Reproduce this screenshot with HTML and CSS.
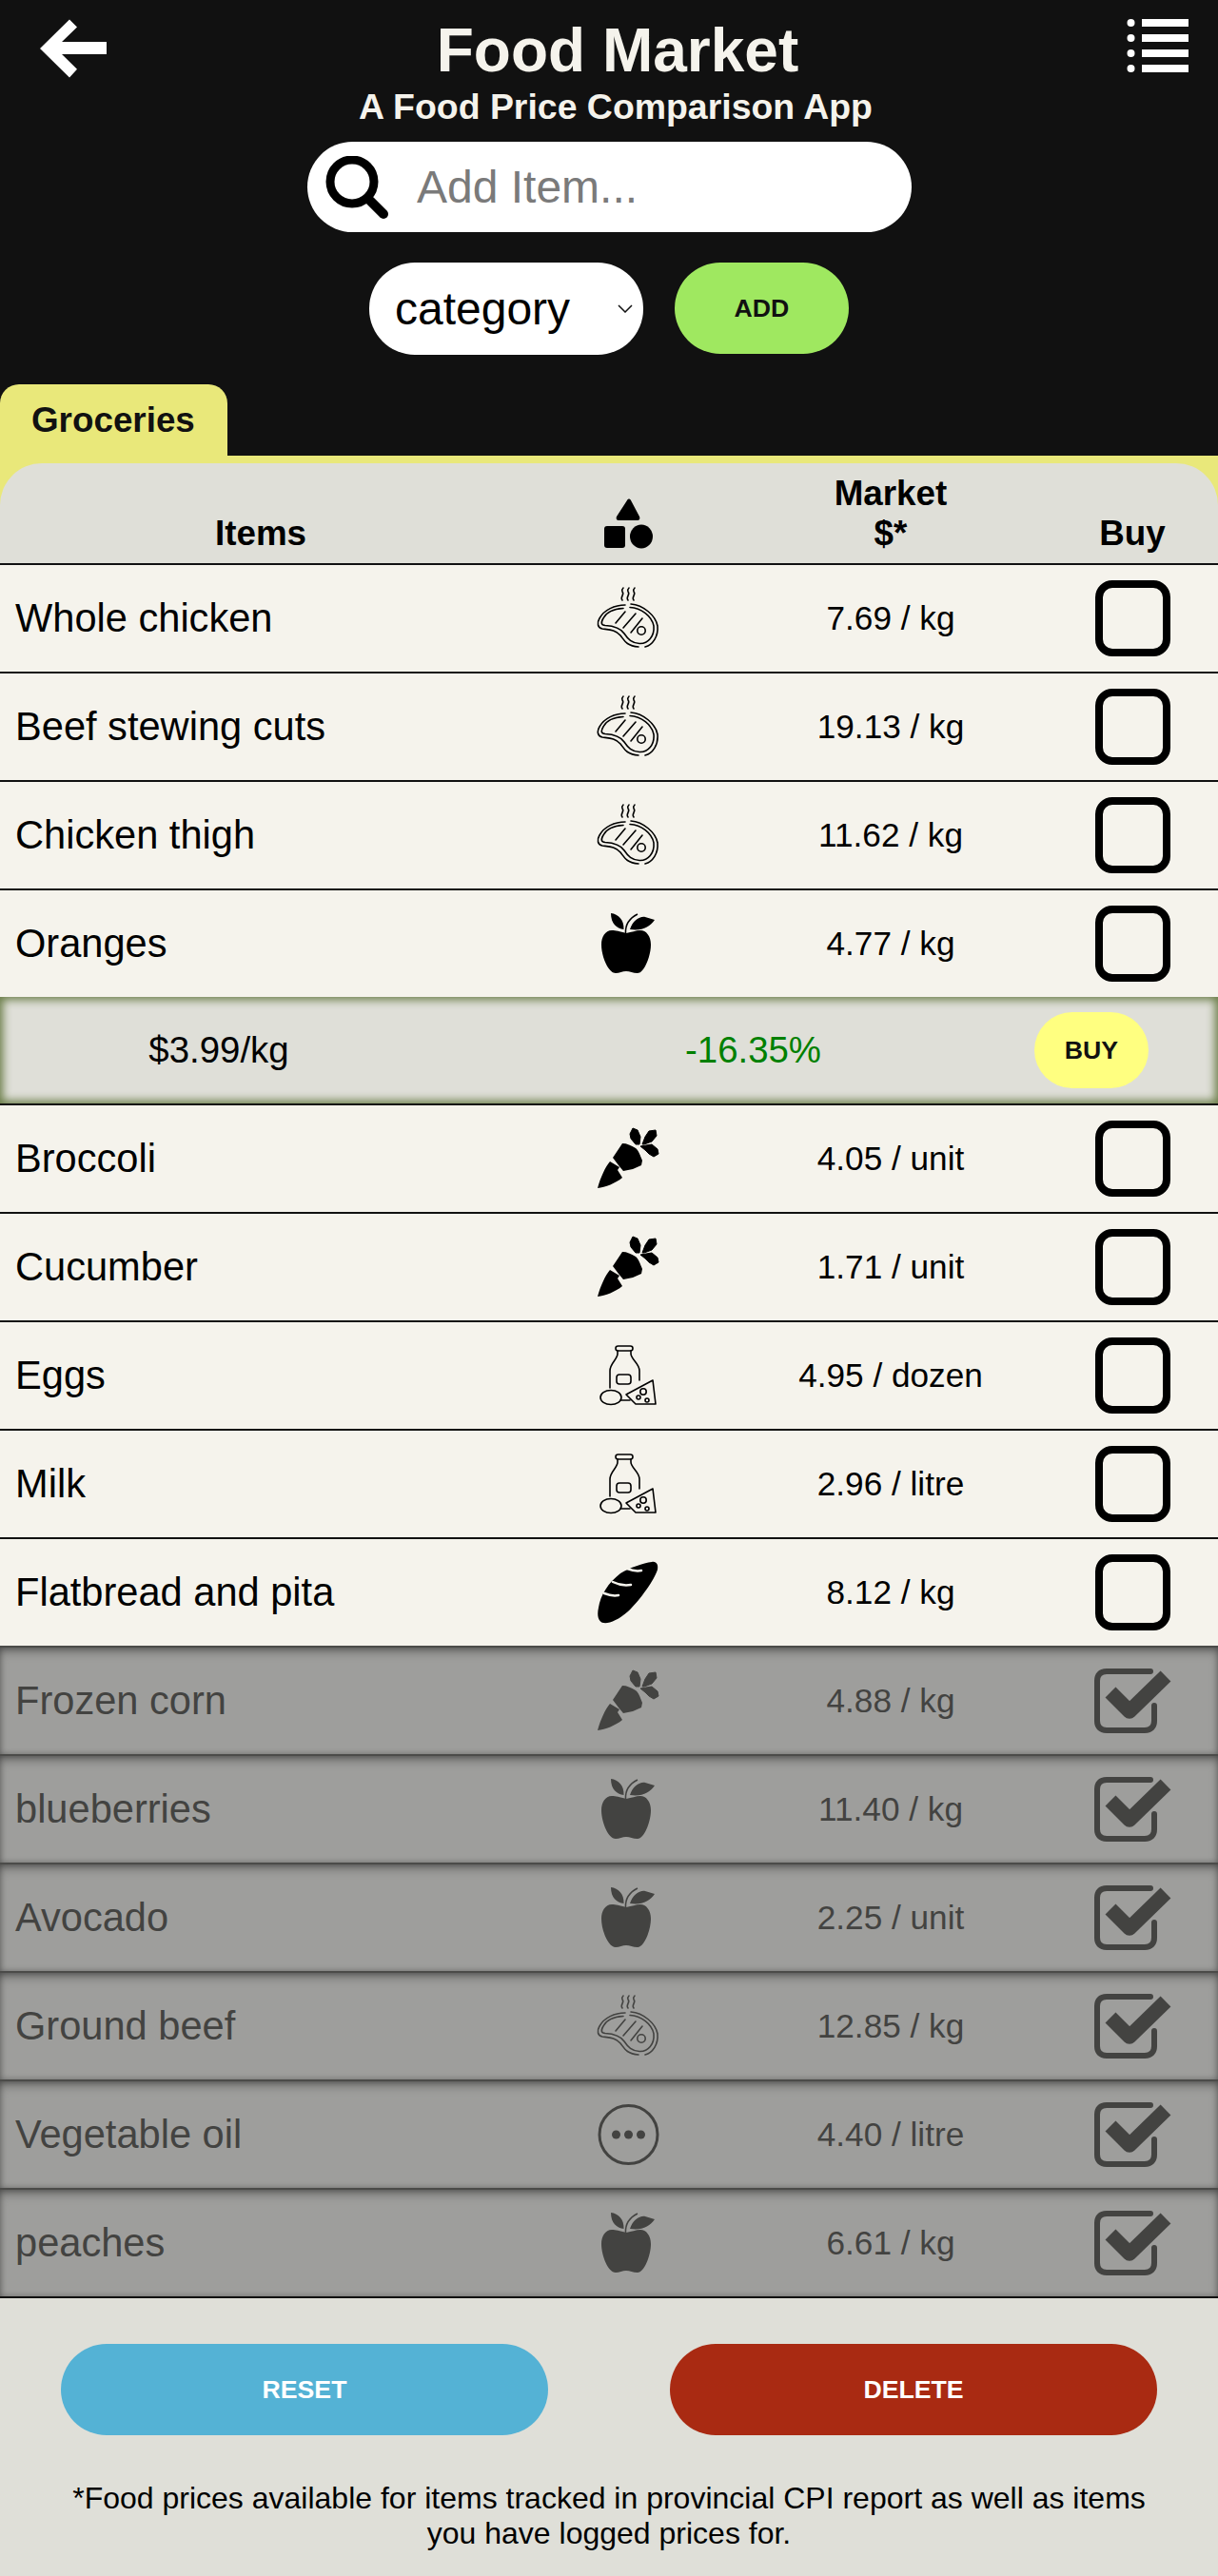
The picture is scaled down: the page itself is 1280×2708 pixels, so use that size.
FILE: index.html
```html
<!DOCTYPE html>
<html lang="en">
<head>
  <meta charset="UTF-8" />
  <meta name="viewport" content="width=device-width, initial-scale=1.0" />
  <title>Food Market</title>
  <link rel="stylesheet" href="styles.css">
</head>
<body>
  <svg class="defs" width="0" height="0">
    <symbol id="i-meat" viewBox="0 0 120 100">
      <g fill="none" stroke="currentColor" stroke-width="1.6" stroke-linecap="round">
        <path d="M54 31c-3-4 3-6 0-9-1-2 0-3 1-4M60 31c-3-4 3-6 0-9-1-2 0-3 1-4M66 31c-3-4 3-6 0-9-1-2 0-3 1-4"/>
        <path d="M57 36C46 36 35 41 30 50 27 55 28 60 33 61 40 62 47 62 52 68 56 73 58 79 71 80M78 80C86 78 92 69 91 58 89 47 76 36 63 35"/>
        <path d="M55 39.5C45 40 37 44 34 50 31 55 32 57 36 57.5 45 58 52 60 56 66 60 72 64 76 72 76.5 81 77 88 69 87 58 85 48 74 39 62 38.5"/>
        <path d="M47 55l10-12M55 60l13-15M63 65l12-15"/>
        <circle cx="74" cy="63" r="4.2"/>
      </g>
    </symbol>
    <symbol id="i-fruit" viewBox="-10 -8 120 100">
      <path fill="currentColor" d="M48 31C41 29 37 28 33 28 26 28 22 35 22 43c0 12 7 30 15 30 4 0 7-2 11-2s7 2 12 2c7 0 14-18 14-30 0-9-5-15-11-15-5 0-9 2-15 3z"/>
      <path fill="currentColor" d="M32 10c8 1 14 7 13.5 17C38 26 32 21 32 10zM52 27c3-9 10-14 16-13l10 3c-5 7-13 12-26 10z"/>
      <path fill="none" stroke="currentColor" stroke-width="1.5" d="M47.5 31C47 22 52 15 60 11"/>
    </symbol>
    <symbol id="i-veg" viewBox="-10 -2 120 100">
      <path fill="currentColor" d="M18 79c3-11 8-22 13-28l10 6-2 3 5 8c-7 6-18 10-26 11z"/>
      <path fill="currentColor" d="M44 32l-10 15 6 8 5 6 5-1 5-1 9-4 1-5c-2-5-4-11-7-13-5-3-9-5-14-5z"/>
      <path fill="currentColor" stroke="currentColor" stroke-linejoin="round" d="M58 33l-5-6-1-5 3-6 5 2 3 7-1 8zM65 33l3-8 4-6 7-1 1 6-5 6-8 3zM63 35l12-2 6 5 1 5-5 3-5-3-4-4z"/>
    </symbol>
    <symbol id="i-dairy" viewBox="0 0 120 100">
      <g fill="none" stroke="currentColor" stroke-width="1.6" stroke-linecap="round" stroke-linejoin="round">
        <rect x="47" y="19" width="18" height="5" rx="2.5"/>
        <path d="M49 24v3c0 6-8 10-8 18v18M63 24v3c0 6 9 10 9 18v10M52 76h10"/>
        <rect x="48" y="49" width="15" height="10" rx="3"/>
        <ellipse cx="42" cy="73" rx="11" ry="7.5"/>
        <path d="M58 70l28-15 3 25H68z"/>
        <circle cx="76" cy="67" r="3.2"/>
        <circle cx="71" cy="73" r="2"/>
        <circle cx="80" cy="76" r="2"/>
      </g>
    </symbol>
    <symbol id="i-bread" viewBox="0 0 120 100">
      <path fill="currentColor" d="M85 18c5-1 7 3 6 8-3 10-18 32-31 44-10 9-20 13-26 12-5-1-7-7-5-16 2-13 10-26 23-36 10-6 24-11 33-12z"/>
      <path fill="none" stroke="#f5f3ec" stroke-width="2.5" stroke-linecap="round" d="M59 25c5 2 10 3 15 2M44 39c6 3 13 4 19 3M35 51c5 2 10 3 15 2"/>
    </symbol>
    <symbol id="i-other" viewBox="0 0 120 100">
      <circle cx="60.5" cy="50" r="30.5" fill="none" stroke="currentColor" stroke-width="3"/>
      <circle cx="47.5" cy="50" r="4.5" fill="currentColor"/>
      <circle cx="60.5" cy="50" r="4.5" fill="currentColor"/>
      <circle cx="73.5" cy="50" r="4.5" fill="currentColor"/>
    </symbol>
    <symbol id="i-check" viewBox="0 -2 120 100">
      <path fill="none" stroke="currentColor" stroke-width="6" stroke-linecap="round" d="M79 17H33c-7 0-10 4-10 10v42c0 6 3 10 10 10h40c7 0 10-4 10-10V53"/>
      <path fill="none" stroke="currentColor" stroke-width="15.5" stroke-linejoin="round" d="M37 39l20 20 38-37"/>
    </symbol>
  </svg>

  <header class="top">
    <a class="back" href="#" aria-label="Back">
      <svg width="72" height="64" viewBox="0 0 72 64"><path fill="#fff" d="M0 31 31 .5l8 8L23 24h47v13H23l16 15.7-8 8.800z"/></svg>
    </a>
    <a class="menu" href="#" aria-label="Menu">
      <svg width="65" height="56" viewBox="0 0 65 56" fill="#fff">
        <circle cx="4.5" cy="4" r="4"/><rect x="16" width="49" height="8"/>
        <circle cx="4.5" cy="20" r="4"/><rect x="16" y="16" width="49" height="8"/>
        <circle cx="4.5" cy="36" r="4"/><rect x="16" y="32" width="49" height="8"/>
        <circle cx="4.5" cy="52" r="4"/><rect x="16" y="48" width="49" height="8"/>
      </svg>
    </a>
    <h1>Food Market</h1>
    <h3>A Food Price Comparison App</h3>
    <div class="search">
      <svg width="66" height="66" viewBox="0 0 66 66">
        <circle cx="28" cy="27" r="23" fill="none" stroke="#000" stroke-width="9"/>
        <path d="M47 47l14 14" stroke="#000" stroke-width="10" stroke-linecap="round"/>
      </svg>
      <input type="text" placeholder="Add Item..." />
    </div>
    <div class="add-row">
      <div class="select-wrap">
        <select>
          <option>category</option>
        </select>
        <svg class="chevron" width="16" height="9" viewBox="0 0 16 9"><path d="M1 1l7 7 7-7" fill="none" stroke="#111" stroke-width="1.5"/></svg>
      </div>
      <button class="btn btn-add">ADD</button>
    </div>
    <div class="tab">Groceries</div>
  </header>

  <main class="panel">
    <div class="row head">
      <div class="cell">Items</div>
      <div class="cell">
        <svg width="52" height="54" viewBox="0 0 52 54">
          <path d="M24 2c1-2 3-2 4 0l9 17c1 2 0 4-2 4H15c-2 0-3-2-2-4z"/>
          <rect x="0" y="29" width="22" height="23" rx="3"/>
          <ellipse cx="39" cy="40" rx="12" ry="12.5"/>
        </svg>
      </div>
      <div class="cell">Market<br>$*</div>
      <div class="cell">Buy</div>
    </div>

    <div class="row">
      <div class="name">Whole chicken</div>
      <svg class="ico"><use href="#i-meat"/></svg>
      <div class="price">7.69 / kg</div>
      <div class="box"></div>
    </div>
    <div class="row">
      <div class="name">Beef stewing cuts</div>
      <svg class="ico"><use href="#i-meat"/></svg>
      <div class="price">19.13 / kg</div>
      <div class="box"></div>
    </div>
    <div class="row">
      <div class="name">Chicken thigh</div>
      <svg class="ico"><use href="#i-meat"/></svg>
      <div class="price">11.62 / kg</div>
      <div class="box"></div>
    </div>
    <div class="row open">
      <div class="name">Oranges</div>
      <svg class="ico"><use href="#i-fruit"/></svg>
      <div class="price">4.77 / kg</div>
      <div class="box"></div>
    </div>
    <div class="deal">
      <div class="deal-price">$3.99/kg</div>
      <div class="deal-pct">-16.35%</div>
      <button class="btn btn-buy">BUY</button>
    </div>
    <div class="row">
      <div class="name">Broccoli</div>
      <svg class="ico"><use href="#i-veg"/></svg>
      <div class="price">4.05 / unit</div>
      <div class="box"></div>
    </div>
    <div class="row">
      <div class="name">Cucumber</div>
      <svg class="ico"><use href="#i-veg"/></svg>
      <div class="price">1.71 / unit</div>
      <div class="box"></div>
    </div>
    <div class="row">
      <div class="name">Eggs</div>
      <svg class="ico"><use href="#i-dairy"/></svg>
      <div class="price">4.95 / dozen</div>
      <div class="box"></div>
    </div>
    <div class="row">
      <div class="name">Milk</div>
      <svg class="ico"><use href="#i-dairy"/></svg>
      <div class="price">2.96 / litre</div>
      <div class="box"></div>
    </div>
    <div class="row">
      <div class="name">Flatbread and pita</div>
      <svg class="ico"><use href="#i-bread"/></svg>
      <div class="price">8.12 / kg</div>
      <div class="box"></div>
    </div>

    <div class="row done">
      <div class="name">Frozen corn</div>
      <svg class="ico"><use href="#i-veg"/></svg>
      <div class="price">4.88 / kg</div>
      <svg class="ico"><use href="#i-check"/></svg>
    </div>
    <div class="row done">
      <div class="name">blueberries</div>
      <svg class="ico"><use href="#i-fruit"/></svg>
      <div class="price">11.40 / kg</div>
      <svg class="ico"><use href="#i-check"/></svg>
    </div>
    <div class="row done">
      <div class="name">Avocado</div>
      <svg class="ico"><use href="#i-fruit"/></svg>
      <div class="price">2.25 / unit</div>
      <svg class="ico"><use href="#i-check"/></svg>
    </div>
    <div class="row done">
      <div class="name">Ground beef</div>
      <svg class="ico"><use href="#i-meat"/></svg>
      <div class="price">12.85 / kg</div>
      <svg class="ico"><use href="#i-check"/></svg>
    </div>
    <div class="row done">
      <div class="name">Vegetable oil</div>
      <svg class="ico"><use href="#i-other"/></svg>
      <div class="price">4.40 / litre</div>
      <svg class="ico"><use href="#i-check"/></svg>
    </div>
    <div class="row done">
      <div class="name">peaches</div>
      <svg class="ico"><use href="#i-fruit"/></svg>
      <div class="price">6.61 / kg</div>
      <svg class="ico"><use href="#i-check"/></svg>
    </div>
  </main>

  <footer class="foot">
    <div class="foot-btns">
      <button class="btn btn-reset">RESET</button>
      <button class="btn btn-delete">DELETE</button>
    </div>
    <p>*Food prices available for items tracked in provincial CPI report as well as items you have logged prices for.</p>
  </footer>
</body>
</html>
```

FILE: styles.css
```css
body {
  margin: 0;
  font-family: "Liberation Sans", Arial, sans-serif;
  background: #111;
  color: #000;
}
.defs {
  position: absolute;
}
.top {
  position: relative;
  background: #111;
  padding-top: 16px;
  text-align: center;
}
.back {
  position: absolute;
  left: 42px;
  top: 20px;
}
.menu {
  position: absolute;
  left: 1184px;
  top: 20px;
}
.top h1 {
  margin: 0;
  padding-left: 18px;
  font-size: 64px;
  color: #f5f3ec;
}
.top h3 {
  margin: 1px 0 0;
  padding-left: 14px;
  font-size: 37.44px;
  color: #f5f3ec;
}
.search {
  display: flex;
  align-items: center;
  gap: 30px;
  width: 616px;
  height: 95px;
  margin: 15px 0 0 323px;
  padding-left: 19px;
  background: #fff;
  border-radius: 48px;
}
.search svg {
  flex: none;
}
.search input {
  width: 480px;
  border: none;
  outline: none;
  padding: 0;
  background: none;
  font: 48px "Liberation Sans", Arial, sans-serif;
}
.search input::placeholder {
  color: #7a7a7a;
}
.add-row {
  display: flex;
  justify-content: center;
  align-items: flex-start;
  gap: 33px;
  margin-top: 32px;
}
.select-wrap {
  position: relative;
  height: 97px;
}
.select-wrap select {
  appearance: none;
  width: 288px;
  height: 97px;
  padding-left: 27px;
  border: none;
  border-radius: 48px;
  background: #fff;
  color: #000;
  font: 48px "Liberation Sans", Arial, sans-serif;
}
.chevron {
  position: absolute;
  left: 261px;
  top: 44px;
}
.btn {
  border: none;
  font-family: "Liberation Sans", Arial, sans-serif;
  font-size: 26.67px;
  font-weight: bold;
  color: #111;
  border-radius: 48px;
}
.btn-add {
  width: 183px;
  height: 96px;
  background: #9fe860;
}
.tab {
  width: 173px;
  height: 75px;
  margin-top: 31px;
  padding: 0 33px;
  background: #e9e87a;
  border-radius: 20px 20px 0 0;
  font-size: 36.8px;
  font-weight: bold;
  line-height: 76px;
  color: #111;
  text-align: left;
}
.panel {
  background: #e9e87a;
  padding-top: 8px;
}
.row {
  display: grid;
  grid-template-columns: 548px 224px 328px 180px;
  align-items: center;
  height: 112px;
  background: #f5f3ec;
  border-bottom: 2px solid #111;
}
.row:has(+ .done) {
  border-bottom-color: #4b4b49;
}
.row.open {
  border-bottom: none;
}
.head {
  align-items: end;
  height: 105px;
  background: #dfdfd8;
  border-radius: 44px 44px 0 0;
}
.cell {
  padding-bottom: 10px;
  font-size: 36.8px;
  font-weight: bold;
  line-height: 42px;
  text-align: center;
}
.cell svg {
  display: block;
  margin: 0 auto 4px;
  transform: translateX(1px);
}
.name {
  padding-left: 16px;
  font-size: 41.6px;
}
.price {
  font-size: 35.2px;
  text-align: center;
}
.ico {
  justify-self: center;
  width: 120px;
  height: 100px;
  color: #000;
}
.box {
  justify-self: center;
  box-sizing: border-box;
  width: 79px;
  height: 80px;
  border: 8px solid #000;
  border-radius: 18px;
}
.done {
  background: #9e9e9c;
  color: #434341;
  border-bottom-color: #4b4b49;
  box-shadow: inset 0 6px 12px -3px rgba(0, 0, 0, 0.4), inset 0 0 6px rgba(0, 0, 0, 0.3);
}
.done .ico {
  color: #434341;
}
.done:last-child {
  border-bottom-color: #111;
}
.deal {
  display: grid;
  grid-template-columns: 460px 1fr 120px;
  align-items: center;
  height: 112px;
  padding-right: 73px;
  background: #dfdfd8;
  border-bottom: 2px solid #111;
  box-shadow: inset 0 0 10px 3px #6a7d48;
  font-size: 38.4px;
}
.deal-price {
  text-align: center;
}
.deal-pct {
  padding-left: 36px;
  text-align: center;
  color: #008000;
}
.btn-buy {
  width: 120px;
  height: 80px;
  background: #ffff80;
}
.foot {
  background: #dfdfd8;
  padding: 48px 64px 0;
  height: 244px;
  text-align: center;
  font-size: 32px;
  overflow: hidden;
}
.foot-btns {
  display: flex;
  justify-content: space-between;
}
.foot-btns .btn {
  width: 512px;
  height: 96px;
  color: #fff;
}
.btn-reset {
  background: #54b2d5;
}
.btn-delete {
  background: #a92a12;
}
.foot p {
  margin: 48px 0 0;
}
```
